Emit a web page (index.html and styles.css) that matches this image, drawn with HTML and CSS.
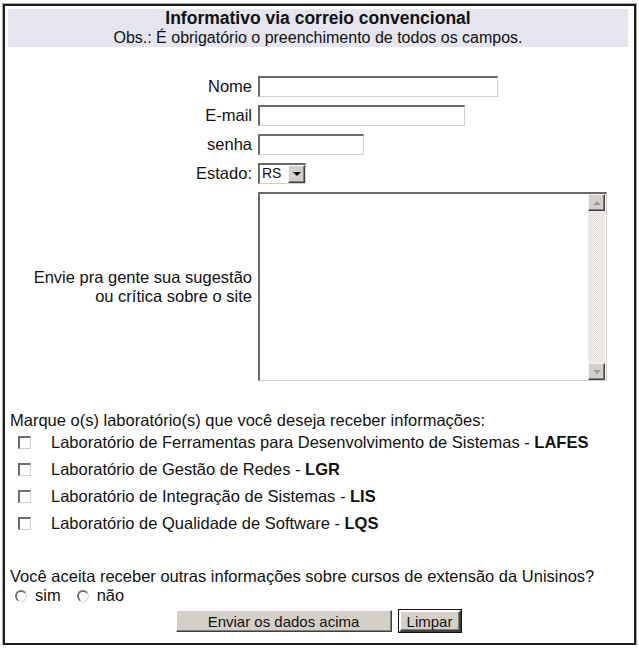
FILE: index.html
```html
<!DOCTYPE html>
<html lang="pt">
<head>
<meta charset="utf-8">
<title>Informativo via correio convencional</title>
<link rel="stylesheet" href="styles.css">
</head>
<body>
<form class="frame">
  <div class="header">
    <div class="title">Informativo via correio convencional</div>
    <div class="subtitle">Obs.: É obrigatório o preenchimento de todos os campos.</div>
  </div>

  <div class="fields">
    <label class="lbl" for="nome">Nome</label>
    <div class="ctl"><input id="nome" class="txt w-nome" type="text"></div>

    <label class="lbl" for="email">E-mail</label>
    <div class="ctl"><input id="email" class="txt w-email" type="text"></div>

    <label class="lbl" for="senha">senha</label>
    <div class="ctl"><input id="senha" class="txt w-senha" type="password"></div>

    <label class="lbl" for="estado">Estado:</label>
    <div class="ctl">
      <div class="select" id="estado">
        <span class="sel-val">RS</span>
        <span class="sel-btn"><span class="tri-down"></span></span>
      </div>
    </div>

    <label class="lbl lbl-area" for="msg">Envie pra gente sua sugestão<br>ou crítica sobre o site</label>
    <div class="ctl">
      <div class="area">
        <textarea id="msg"></textarea>
        <div class="scroll">
          <span class="sbtn"><span class="tri-up"></span></span>
          <span class="track"></span>
          <span class="sbtn"><span class="tri-dn"></span></span>
        </div>
      </div>
    </div>
  </div>

  <p class="question">Marque o(s) laboratório(s) que você deseja receber informações:</p>
  <ul class="labs">
    <li><input type="checkbox" class="chk" id="l1"><label for="l1">Laboratório de Ferramentas para Desenvolvimento de Sistemas - <b>LAFES</b></label></li>
    <li><input type="checkbox" class="chk" id="l2"><label for="l2">Laboratório de Gestão de Redes - <b>LGR</b></label></li>
    <li><input type="checkbox" class="chk" id="l3"><label for="l3">Laboratório de Integração de Sistemas - <b>LIS</b></label></li>
    <li><input type="checkbox" class="chk" id="l4"><label for="l4">Laboratório de Qualidade de Software - <b>LQS</b></label></li>
  </ul>

  <p class="question q2">Você aceita receber outras informações sobre cursos de extensão da Unisinos?</p>
  <div class="radios">
    <input type="radio" class="rad" name="ext" id="sim"><label for="sim">sim</label>
    <input type="radio" class="rad" name="ext" id="nao"><label for="nao">não</label>
  </div>

  <div class="buttons">
    <button type="button" class="btn btn-send">Enviar os dados acima</button>
    <button type="reset" class="btn btn-reset">Limpar</button>
  </div>
</form>
</body>
</html>
```

FILE: styles.css
```css
html, body {
  margin: 0;
  padding: 0;
  background: #ffffff;
}

body {
  font-family: "Liberation Sans", Arial, sans-serif;
  font-size: 16.5px;
  color: #111;
}

.frame {
  margin: 4px 3px 0 3px;
  height: 641px;
  box-sizing: border-box;
  border: 2px solid #1c1c1c;
  box-shadow: 0 0 0 1px #a8a8a8;
  padding: 3px 6px 0 3px;
  display: flex;
  flex-direction: column;
}

.header {
  background: #e5e5ef;
  text-align: center;
  padding: 0;
  line-height: 19px;
}

.title {
  font-weight: bold;
  font-size: 17.5px;
}

.subtitle {
  font-size: 16px;
}

.fields {
  display: grid;
  grid-template-columns: 244px 1fr;
  column-gap: 6px;
  row-gap: 8px;
  margin-top: 29px;
  align-items: center;
}

.lbl {
  text-align: right;
  line-height: 19px;
}

.lbl-area {
  line-height: 19px;
}

.ctl {
  display: flex;
}

.txt {
  box-sizing: border-box;
  height: 21px;
  margin: 0;
  padding: 1px 3px;
  border-style: solid;
  border-width: 2px 1px 1px 2px;
  border-color: #6a6a6a #d4d0c8 #d4d0c8 #6a6a6a;
  background: #fff;
  font-family: inherit;
  font-size: 14px;
  outline: none;
}

.w-nome { width: 240px; }
.w-email { width: 207px; }
.w-senha { width: 106px; }

.select {
  box-sizing: border-box;
  width: 48px;
  height: 21px;
  display: flex;
  align-items: stretch;
  border-style: solid;
  border-width: 2px 1px 1px 2px;
  border-color: #6a6a6a #d4d0c8 #d4d0c8 #6a6a6a;
  background: #fff;
}

.sel-val {
  flex: 1;
  font-size: 14px;
  line-height: 17px;
  padding-left: 2px;
}

.sel-btn {
  width: 17px;
  background: #d4d0c8;
  box-sizing: border-box;
  border-style: solid;
  border-width: 1px;
  border-color: #fff #404040 #404040 #fff;
  box-shadow: inset -1px -1px #808080;
  display: flex;
  align-items: center;
  justify-content: center;
}

.tri-down {
  width: 0;
  height: 0;
  border-left: 4px solid transparent;
  border-right: 4px solid transparent;
  border-top: 4px solid #000;
}

.area {
  box-sizing: border-box;
  width: 349px;
  height: 189px;
  display: flex;
  border-style: solid;
  border-width: 2px 1px 1px 2px;
  border-color: #6a6a6a #d4d0c8 #d4d0c8 #6a6a6a;
  background: #fff;
}

.area textarea {
  flex: 1;
  border: 0;
  margin: 0;
  padding: 2px;
  resize: none;
  outline: none;
  font: inherit;
  background: #fff;
}

.scroll {
  width: 17px;
  display: flex;
  flex-direction: column;
  margin-right: 1px;
}

.sbtn {
  box-sizing: border-box;
  height: 17px;
  background: #d4d0c8;
  border-style: solid;
  border-width: 1px;
  border-color: #f4f4f4 #404040 #404040 #f4f4f4;
  box-shadow: inset -1px -1px #808080;
  display: flex;
  align-items: center;
  justify-content: center;
}

.track {
  flex: 1;
  background-color: #eceae4;
  background-image: repeating-conic-gradient(#e2dfd7 0 25%, #f4f3ef 0 50%);
  background-size: 2px 2px;
}

.tri-up {
  width: 0;
  height: 0;
  border-left: 4px solid transparent;
  border-right: 4px solid transparent;
  border-bottom: 4px solid #9a9a9a;
}

.tri-dn {
  width: 0;
  height: 0;
  border-left: 4px solid transparent;
  border-right: 4px solid transparent;
  border-top: 4px solid #9a9a9a;
}

.question {
  margin: 30px 0 0 2px;
  line-height: 19px;
}

.q2 {
  margin-top: 34px;
}

.labs {
  list-style: none;
  margin: 3px 0 0;
  padding: 0;
  display: flex;
  flex-direction: column;
  gap: 8px;
}

.labs li {
  display: flex;
  align-items: center;
  line-height: 19px;
  padding-left: 10px;
}

.chk {
  appearance: none;
  -webkit-appearance: none;
  box-sizing: border-box;
  width: 13px;
  height: 13px;
  margin: 0 20px 0 0;
  border-style: solid;
  border-width: 2px 1px 1px 2px;
  border-color: #6e6e6e #d4d0c8 #d4d0c8 #6e6e6e;
  background: #fff;
}

.labs b {
  font-weight: bold;
}

.radios {
  display: flex;
  align-items: center;
  margin-top: 0;
  padding-left: 7px;
  line-height: 19px;
}

.rad {
  appearance: none;
  -webkit-appearance: none;
  box-sizing: border-box;
  width: 12px;
  height: 12px;
  margin: 0 8px 0 0;
  border-radius: 50%;
  border-style: solid;
  border-width: 2px 1px 1px 2px;
  border-color: #6e6e6e #d8d8d8 #d8d8d8 #6e6e6e;
  background: #fff;
}

.radios label + .rad {
  margin-left: 16px;
}

.buttons {
  display: flex;
  justify-content: center;
  gap: 7px;
  margin-top: 5px;
}

.btn {
  box-sizing: border-box;
  height: 22px;
  margin: 0;
  padding: 0 4px;
  font-family: "Liberation Sans", Arial, sans-serif;
  font-size: 15px;
  color: #111;
  background: #d4d0c8;
  border-style: solid;
  border-width: 1px;
  border-color: #ffffff #404040 #404040 #ffffff;
  box-shadow: inset -1px -1px #808080;
}

.btn-send {
  width: 216px;
}

.btn-reset {
  width: 62px;
  outline: 1px solid #111;
  outline-offset: 0;
  border-width: 2px;
  border-color: #fff #404040 #404040 #fff;
}
```
